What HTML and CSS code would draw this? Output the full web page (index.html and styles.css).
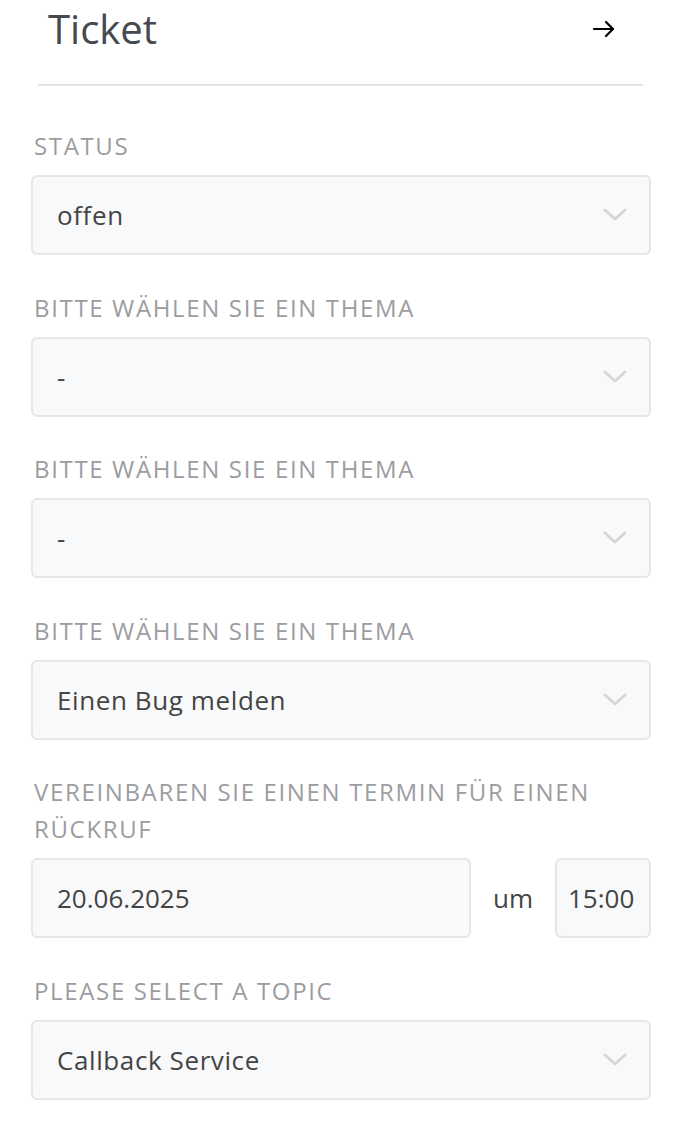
FILE: index.html
```html
<!DOCTYPE html>
<html lang="de">
  <head>
    <meta charset="UTF-8" />
    <meta name="viewport" content="width=device-width, initial-scale=1.0" />
    <title>Ticket</title>
    <link rel="stylesheet" href="styles.css">
  </head>
  <body>
    <div class="sidebar">
      <div class="sidebar-header">
        <h1 class="sidebar-title">Ticket</h1>
        <button class="close-btn" type="button" aria-label="Schließen">
          <svg width="24" height="20" viewBox="0 0 24 20" fill="none" stroke="#000" stroke-width="2.2" stroke-linecap="round" stroke-linejoin="round">
            <path d="M2 10 H21" />
            <path d="M14 3 L21 10 L14 17" />
          </svg>
        </button>
      </div>
      <div class="divider"></div>

      <form class="ticket-form">
        <div class="field">
          <label class="field-label">Status</label>
          <div class="select-box">
            <span class="select-value">offen</span>
            <svg class="chevron" width="24" height="14" viewBox="0 0 24 14"><path d="M2 2 L12 11 L22 2" /></svg>
          </div>
        </div>

        <div class="field">
          <label class="field-label">Bitte wählen Sie ein Thema</label>
          <div class="select-box">
            <span class="select-value">-</span>
            <svg class="chevron" width="24" height="14" viewBox="0 0 24 14"><path d="M2 2 L12 11 L22 2" /></svg>
          </div>
        </div>

        <div class="field">
          <label class="field-label">Bitte wählen Sie ein Thema</label>
          <div class="select-box">
            <span class="select-value">-</span>
            <svg class="chevron" width="24" height="14" viewBox="0 0 24 14"><path d="M2 2 L12 11 L22 2" /></svg>
          </div>
        </div>

        <div class="field">
          <label class="field-label">Bitte wählen Sie ein Thema</label>
          <div class="select-box">
            <span class="select-value">Einen Bug melden</span>
            <svg class="chevron" width="24" height="14" viewBox="0 0 24 14"><path d="M2 2 L12 11 L22 2" /></svg>
          </div>
        </div>

        <div class="field">
          <label class="field-label">Vereinbaren Sie einen Termin für einen Rückruf</label>
          <div class="date-row">
            <div class="input-box date-input">20.06.2025</div>
            <span class="date-sep">um</span>
            <div class="input-box time-input">15:00</div>
          </div>
        </div>

        <div class="field">
          <label class="field-label">Please select a topic</label>
          <div class="select-box">
            <span class="select-value">Callback Service</span>
            <svg class="chevron" width="24" height="14" viewBox="0 0 24 14"><path d="M2 2 L12 11 L22 2" /></svg>
          </div>
        </div>
      </form>
    </div>
  </body>
</html>
```

FILE: styles.css
```css
body {
  margin: 0;
  background-color: #fff;
  font-family: "Open Sans", "Noto Sans", sans-serif;
  color: #444;
}

.sidebar {
  width: 678px;
}

.sidebar-header {
  display: flex;
  justify-content: space-between;
  align-items: center;
  height: 58px;
  padding: 0 62px 0 48px;
}

.sidebar-title {
  margin: 0;
  font-size: 40px;
  font-weight: 400;
  line-height: 58px;
  color: #46494e;
}

.close-btn {
  border: none;
  background: none;
  padding: 0;
  display: flex;
  cursor: pointer;
}

.divider {
  height: 2px;
  margin: 26px 35px 0 38px;
  background-color: #e4e4e4;
}

.ticket-form {
  padding: 41px 27px 0 31px;
}

.field {
  margin-bottom: 33.5px;
}

.field-label {
  display: block;
  margin: 0 0 11px 3px;
  font-size: 24px;
  line-height: 37px;
  letter-spacing: 1.65px;
  text-transform: uppercase;
  color: #9c9ca1;
}

.select-box,
.input-box {
  box-sizing: border-box;
  height: 80px;
  display: flex;
  align-items: center;
  background-color: #f8f9fb;
  border: 2px solid #e6e6e8;
  border-radius: 6px;
  font-size: 26px;
  color: #444;
}

.select-box {
  justify-content: space-between;
  padding: 0 22px 0 24px;
}

.select-value {
  letter-spacing: 0.6px;
}

.chevron {
  fill: none;
  stroke: #d6d6d8;
  stroke-width: 3;
  stroke-linecap: round;
  stroke-linejoin: round;
}

.date-row {
  display: flex;
  align-items: center;
  gap: 22px;
}

.date-input {
  flex: 1;
  padding-left: 24px;
}

.date-sep {
  font-size: 26px;
  color: #444;
}

.time-input {
  width: 96px;
  padding-left: 11px;
  white-space: nowrap;
  overflow: hidden;
}
```
